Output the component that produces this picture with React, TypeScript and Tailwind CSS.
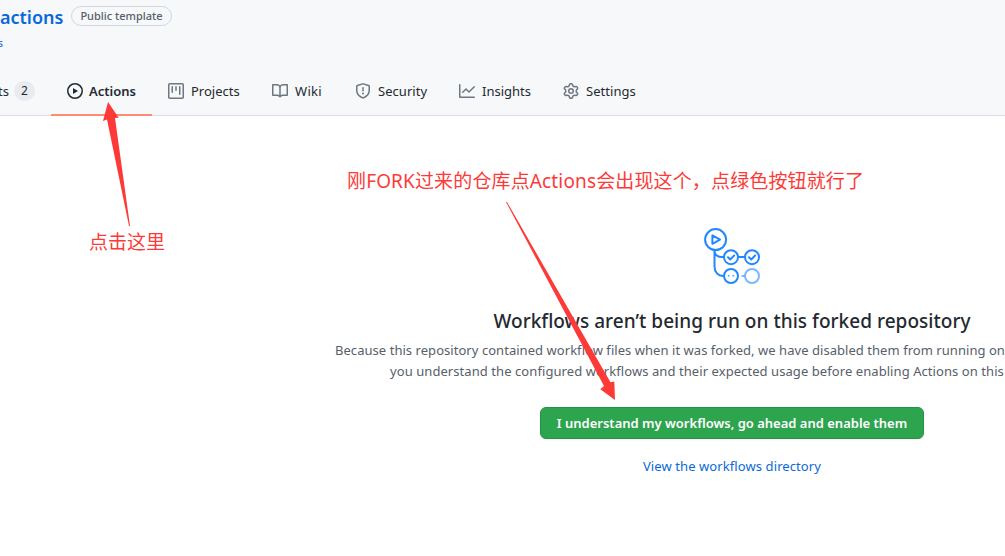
function Octicon({ d }: { d: string }) {
  return (
    <svg viewBox="0 0 16 16" className="size-4 shrink-0" fill="currentColor" fillRule="evenodd">
      <path d={d} />
    </svg>
  );
}

const paths = {
  play: 'M1.5 8a6.5 6.5 0 1113 0 6.5 6.5 0 01-13 0zM8 0a8 8 0 100 16A8 8 0 008 0zM6.379 5.227A.25.25 0 006 5.442v5.117a.25.25 0 00.379.214l4.264-2.559a.25.25 0 000-.428L6.379 5.227z',
  project:
    'M1.75 0A1.75 1.75 0 000 1.75v12.5C0 15.216.784 16 1.75 16h12.5A1.75 1.75 0 0016 14.25V1.75A1.75 1.75 0 0014.25 0H1.75zM1.5 1.75a.25.25 0 01.25-.25h12.5a.25.25 0 01.25.25v12.5a.25.25 0 01-.25.25H1.75a.25.25 0 01-.25-.25V1.75zM11.75 3a.75.75 0 00-.75.75v7.5a.75.75 0 001.5 0v-7.5a.75.75 0 00-.75-.75zm-8.25.75a.75.75 0 011.5 0v5.5a.75.75 0 01-1.5 0v-5.5zM8 3a.75.75 0 00-.75.75v3.5a.75.75 0 001.5 0v-3.5A.75.75 0 008 3z',
  book: 'M0 1.75A.75.75 0 01.75 1h4.253c1.227 0 2.317.59 3 1.501A3.744 3.744 0 0111.006 1h4.245a.75.75 0 01.75.75v10.5a.75.75 0 01-.75.75h-4.507a2.25 2.25 0 00-1.591.659l-.622.621a.75.75 0 01-1.06 0l-.622-.621A2.25 2.25 0 005.258 13H.75a.75.75 0 01-.75-.75V1.75zm8.755 3a2.25 2.25 0 012.25-2.25H14.5v9h-3.757c-.71 0-1.4.201-1.992.572l.004-7.322zm-1.504 7.324l.004-5.073-.002-2.253A2.25 2.25 0 005.003 2.5H1.5v9h3.757a3.75 3.75 0 011.994.574z',
  shield:
    'M7.467.133a1.75 1.75 0 011.066 0l5.25 1.68A1.75 1.75 0 0115 3.48V7c0 1.566-.32 3.182-1.303 4.682-.983 1.498-2.585 2.813-5.032 3.855a1.7 1.7 0 01-1.33 0c-2.447-1.042-4.049-2.357-5.032-3.855C1.32 10.182 1 8.566 1 7V3.48a1.75 1.75 0 011.217-1.667l5.25-1.68zm.61 1.429a.25.25 0 00-.153 0l-5.25 1.68a.25.25 0 00-.174.238V7c0 1.358.275 2.666 1.057 3.86.784 1.194 2.121 2.34 4.366 3.297a.2.2 0 00.154 0c2.245-.956 3.582-2.104 4.366-3.298C13.225 9.666 13.5 8.36 13.5 7V3.48a.25.25 0 00-.174-.237l-5.25-1.68zM9 10.5a1 1 0 11-2 0 1 1 0 012 0zm-.25-5.75a.75.75 0 10-1.5 0v3a.75.75 0 001.5 0v-3z',
  graph:
    'M1.5 1.75a.75.75 0 00-1.5 0v12.5c0 .414.336.75.75.75h14.5a.75.75 0 000-1.5H1.5V1.75zm14.28 2.53a.75.75 0 00-1.06-1.06L10 7.94 7.53 5.47a.75.75 0 00-1.06 0L3.22 8.72a.75.75 0 001.06 1.06L7 7.06l2.47 2.47a.75.75 0 001.06 0l5.25-5.25z',
  gear: 'M7.429 1.525a6.593 6.593 0 011.142 0c.036.003.108.036.137.146l.289 1.105c.147.56.55.967.997 1.189.174.086.341.183.501.29.417.278.97.423 1.53.27l1.102-.303c.11-.03.175.016.195.046.219.31.41.641.573.989.014.031.022.11-.059.19l-.815.806c-.411.406-.562.957-.53 1.456a4.588 4.588 0 010 .582c-.032.499.119 1.05.53 1.456l.815.806c.08.08.073.159.059.19a6.494 6.494 0 01-.573.99c-.02.029-.086.074-.195.045l-1.103-.303c-.559-.153-1.112-.008-1.529.27-.16.107-.327.204-.5.29-.449.222-.851.628-.998 1.189l-.289 1.105c-.029.11-.101.143-.137.146a6.613 6.613 0 01-1.142 0c-.036-.003-.108-.037-.137-.146l-.289-1.105c-.147-.56-.55-.967-.997-1.189a4.502 4.502 0 01-.501-.29c-.417-.278-.97-.423-1.53-.27l-1.102.303c-.11.03-.175-.016-.195-.046a6.492 6.492 0 01-.573-.989c-.014-.031-.022-.11.059-.19l.815-.806c.411-.406.562-.957.53-1.456a4.587 4.587 0 010-.582c.032-.499-.119-1.05-.53-1.456l-.815-.806c-.08-.08-.073-.159-.059-.19a6.44 6.44 0 01.573-.99c.02-.029.086-.075.195-.045l1.103.303c.559.153 1.112.008 1.529-.27.16-.107.327-.204.5-.29.449-.222.851-.628.998-1.189l.289-1.105c.029-.11.101-.143.137-.146zM8 0c-.236 0-.47.01-.701.03-.743.065-1.29.615-1.458 1.261l-.29 1.106c-.017.066-.078.158-.211.224a5.994 5.994 0 00-.668.386c-.123.082-.233.09-.3.071L3.27 2.776c-.644-.177-1.392.02-1.82.63a7.977 7.977 0 00-.704 1.217c-.315.675-.111 1.422.363 1.891l.815.806c.05.048.098.147.088.294a6.084 6.084 0 000 .772c.01.147-.038.246-.088.294l-.815.806c-.474.469-.678 1.216-.363 1.891.2.428.436.835.704 1.218.428.609 1.176.806 1.82.63l1.103-.303c.066-.019.176-.011.299.071.213.143.436.272.668.386.133.066.194.158.212.224l.289 1.106c.169.646.715 1.196 1.458 1.26a8.094 8.094 0 001.402 0c.743-.064 1.29-.614 1.458-1.26l.29-1.106c.017-.066.078-.158.211-.224a5.98 5.98 0 00.668-.386c.123-.082.233-.09.3-.071l1.102.302c.644.177 1.392-.02 1.82-.63.268-.382.505-.789.704-1.217.315-.675.111-1.422-.364-1.891l-.814-.806c-.05-.048-.098-.147-.088-.294a6.1 6.1 0 000-.772c-.01-.147.039-.246.088-.294l.814-.806c.475-.469.679-1.216.364-1.891a7.992 7.992 0 00-.704-1.218c-.428-.609-1.176-.806-1.82-.63l-1.103.303c-.066.019-.176.011-.299-.071a5.991 5.991 0 00-.668-.386c-.133-.066-.194-.158-.212-.224L10.16 1.29C9.99.645 9.444.095 8.701.031A8.094 8.094 0 008 0zm1.5 8a1.5 1.5 0 11-3 0 1.5 1.5 0 013 0zM11 8a3 3 0 11-6 0 3 3 0 016 0z',
};

function Tab({ icon, label, className }: { icon: string; label: string; className: string }) {
  return (
    <a className={`flex h-[49px] shrink-0 items-center gap-[7px] pb-px pl-4 text-[13px] leading-5 text-[#24292f] ${className}`}>
      <span className="text-[#6e7781]">
        <Octicon d={icon} />
      </span>
      {label}
    </a>
  );
}

function WorkflowIcon() {
  return (
    <svg viewBox="0 0 56 56" className="size-14" fill="none" stroke="#2188ff" strokeWidth="2" strokeLinecap="round" strokeLinejoin="round">
      <circle cx="11.6" cy="11.6" r="10.5" />
      <path d="M8.4 7.4v8.4l7.6-4.2z" />
      <path d="M10.5 22.5v16c0 5.5 3.5 9.5 9 9.5M10.5 22.5c0 4 3 6.5 6.5 6.5h2.5M34.5 29h6" />
      <circle cx="27" cy="29.2" r="7" />
      <circle cx="48" cy="29.2" r="7" />
      <circle cx="27" cy="48" r="7" />
      <path d="M24 29.3l2.2 2.2 4-4M45 29.3l2.2 2.2 4-4" />
      <path d="M24.7 47.8h.01M29.3 47.8h.01" strokeOpacity=".7" />
      <g strokeOpacity=".6">
        <circle cx="48" cy="48" r="7" />
        <path d="M38.3 48h1.5" />
      </g>
    </svg>
  );
}

export default function App() {
  return (
    <div className="relative flex h-[556px] w-[1005px] flex-col overflow-hidden bg-white font-['Noto_Sans','Noto_Sans_CJK_SC',sans-serif] text-[#24292f]">
      <header className="flex h-[116px] shrink-0 flex-col border-b border-[#d8dee4] bg-[#f6f8fa]">
        <div className="flex h-[33px] shrink-0 items-start gap-2 pt-1.5">
          <a className="w-[63px] text-[18px] leading-[22px] font-semibold text-[#0969da]">actions</a>
          <span className="flex h-5 w-[101px] items-center justify-center rounded-full border border-[#d0d7de] text-[11px] leading-[18px] font-medium text-[#57606a]">
            Public template
          </span>
        </div>
        <div className="flex h-[34px] w-[3px] shrink-0 justify-end text-[11px] leading-5 text-[#0969da]">s</div>
        <nav className="flex shrink-0">
          <a className="flex h-[49px] w-[51px] shrink-0 items-center gap-[5px] pb-px text-[13px] leading-5">
            <span className="flex w-[9px] justify-end">ts</span>
            <span className="flex h-5 w-[21px] items-center justify-center rounded-full bg-[#e8ebef] text-[12px]">2</span>
          </a>
          <a className="flex h-[49px] w-[101px] shrink-0 items-center gap-1.5 border-b-2 border-[#fd8c73] pt-px pl-4 text-[13px] leading-5 font-semibold">
            <Octicon d={paths.play} />
            Actions
          </a>
          <Tab icon={paths.project} label="Projects" className="w-[104px]" />
          <Tab icon={paths.book} label="Wiki" className="w-[83px] tracking-[0.3px]" />
          <Tab icon={paths.shield} label="Security" className="w-[104px] tracking-[0.05px]" />
          <Tab icon={paths.graph} label="Insights" className="w-[104px]" />
          <Tab icon={paths.gear} label="Settings" className="w-[104px] tracking-[0.05px]" />
        </nav>
      </header>

      <main className="ml-[332px] flex w-[800px] shrink-0 flex-col items-center pt-28">
        <WorkflowIcon />
        <h1 className="mt-[22px] text-[19px] leading-[30px] font-medium tracking-[0.03px] whitespace-nowrap">
          Workflows aren’t being run on this forked repository
        </h1>
        <div className="mt-1 flex w-full flex-col text-[13px] leading-[21px] tracking-[0.045px] whitespace-nowrap text-[#57606a]">
          <p className="pl-[3px]">
            Because this repository contained workflow files when it was forked, we have disabled them from running on
          </p>
          <p className="pl-[58px] tracking-[0.07px]">
            you understand the configured workflows and their expected usage before enabling Actions on this
          </p>
        </div>
        <button className="mt-[25px] h-8 w-[384px] rounded-md border border-[#2a8f47] bg-[#2da44e] text-[13px] leading-5 font-semibold text-white shadow-xs">
          I understand my workflows, go ahead and enable them
        </button>
        <a className="mt-[17px] text-[13px] leading-[21px] tracking-[0.09px] text-[#0969da]">View the workflows directory</a>
      </main>

      <p className="absolute top-[228px] left-[89px] text-[19px] leading-7 whitespace-nowrap text-[#fd3a38]">点击这里</p>
      <p className="absolute top-[167px] left-[347px] text-[19px] leading-7 tracking-[0.14px] whitespace-nowrap text-[#fd3a38]">
        刚FORK过来的仓库点Actions会出现这个，点绿色按钮就行了
      </p>
      <svg className="pointer-events-none absolute inset-0" width="1005" height="556" fill="#fd3a38">
        <path d="M108 102L118.7 117.7L115 118L130 226H129L107 119.6L103 121Z" />
        <path d="M506 202L507 202L610.5 382.2L614.3 381.5L615 400L600.3 389.3L604 386Z" />
      </svg>
    </div>
  );
}
